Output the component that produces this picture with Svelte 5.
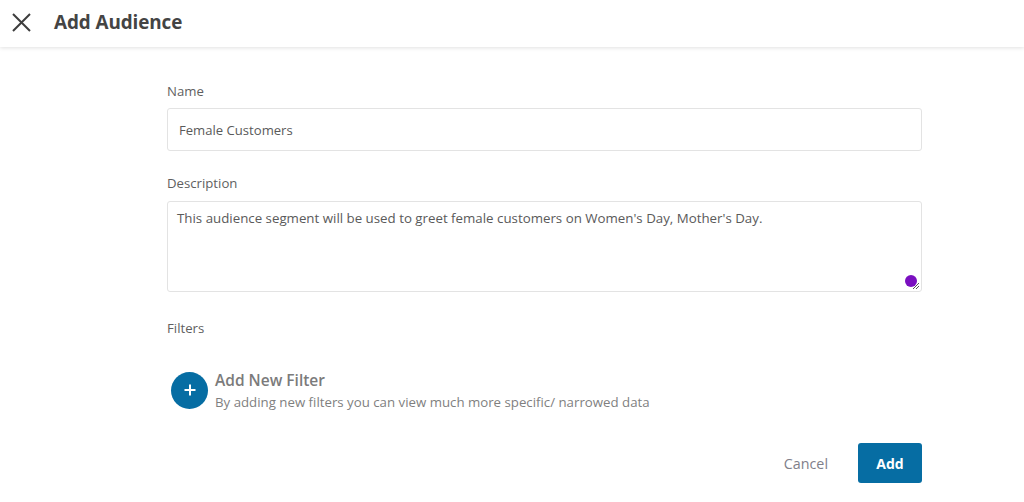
<script>
  let name = 'Female Customers';
  let description = "This audience segment will be used to greet female customers on Women's Day, Mother's Day.";
</script>

<div class="page">
  <header class="header">
    <svg class="close" width="20" height="20" viewBox="0 0 20 20" aria-hidden="true">
      <path d="M2 2 L19 19 M19 2 L2 19" />
    </svg>
    <h1>Add Audience</h1>
  </header>

  <form class="form">
    <label class="field name">
      <span class="label">Name</span>
      <span class="input">{name}</span>
    </label>

    <label class="field desc">
      <span class="label">Description</span>
      <span class="textarea">
        {description}
        <span class="dot"></span>
        <svg class="grip" width="8" height="8" viewBox="0 0 8 8" aria-hidden="true">
          <path d="M1 7 L7 1 M4 7 L7 4" />
        </svg>
      </span>
    </label>

    <div class="label filters">Filters</div>

    <div class="add-filter">
      <span class="plus">
        <svg width="12" height="12" viewBox="0 0 12 12" aria-hidden="true">
          <path d="M6 0.5 V11.5 M0.5 6 H11.5" />
        </svg>
      </span>
      <div class="add-text">
        <div class="add-title">Add New Filter</div>
        <div class="add-sub">By adding new filters you can view much more specific/ narrowed data</div>
      </div>
    </div>

    <div class="actions">
      <button type="button" class="cancel">Cancel</button>
      <button type="button" class="add">Add</button>
    </div>
  </form>
</div>

<style>
  :global(body) {
    margin: 0;
    background: #fff;
  }
  .page {
    height: 502px;
    overflow: hidden;
    font-family: "Open Sans", "Liberation Sans", sans-serif;
    color: #5a5a5a;
  }
  .header {
    height: 47px;
    display: flex;
    align-items: center;
    padding-left: 11px;
    padding-bottom: 4px;
    box-shadow: 0 1px 4px rgba(0, 0, 0, 0.12);
    box-sizing: border-box;
  }
  .close {
    flex: none;
  }
  .close path {
    stroke: #3d3d3d;
    stroke-width: 2;
    fill: none;
  }
  h1 {
    margin: 0 0 0 23px;
    font-size: 18.9px;
    font-weight: 700;
    color: #444;
    letter-spacing: -0.1px;
  }
  .form {
    width: 755px;
    margin-left: 167px;
    padding-top: 34px;
  }
  .field {
    display: block;
  }
  .label {
    display: block;
    font-size: 13.2px;
    line-height: 20px;
    color: #5f5f5f;
  }
  .input {
    display: block;
    box-sizing: border-box;
    height: 43px;
    margin-top: 7px;
    padding-left: 11px;
    border: 1px solid #e3e3e3;
    border-radius: 3px;
    font-size: 13.1px;
    line-height: 43px;
    color: #5a5a5a;
  }
  .desc {
    margin-top: 22px;
  }
  .textarea {
    display: block;
    position: relative;
    box-sizing: border-box;
    height: 91px;
    margin-top: 8px;
    padding: 6px 9px;
    border: 1px solid #e3e3e3;
    border-radius: 3px;
    font-size: 13.3px;
    line-height: 20px;
    color: #5a5a5a;
  }
  .dot {
    position: absolute;
    right: 4px;
    bottom: 4px;
    width: 12px;
    height: 12px;
    border-radius: 50%;
    background: #7a0fc0;
  }
  .grip {
    position: absolute;
    right: 1px;
    bottom: 1px;
  }
  .grip path {
    stroke: #555;
    stroke-width: 1;
    fill: none;
  }
  .filters {
    margin-top: 26px;
  }
  .add-filter {
    display: flex;
    align-items: center;
    gap: 7px;
    margin-top: 29px;
    padding-left: 4px;
  }
  .add-text {
    padding-top: 2px;
  }
  .plus {
    flex: none;
    width: 37px;
    height: 37px;
    border-radius: 50%;
    background: #066da3;
    display: flex;
    align-items: center;
    justify-content: center;
  }
  .plus path {
    stroke: #fff;
    stroke-width: 2;
    fill: none;
  }
  .add-title {
    font-size: 15.5px;
    font-weight: 600;
    line-height: 22px;
    color: #7b7b7b;
  }
  .add-sub {
    font-size: 13.25px;
    line-height: 22px;
    color: #7f7f7f;
  }
  .actions {
    display: flex;
    justify-content: flex-end;
    align-items: center;
    gap: 30px;
    margin-top: 30px;
  }
  button {
    font-family: inherit;
    border: none;
    padding: 0;
    cursor: pointer;
  }
  .cancel {
    background: none;
    font-size: 14.3px;
    color: #80808a;
  }
  .add {
    width: 64px;
    height: 40px;
    border-radius: 3px;
    background: #066da3;
    color: #fff;
    font-size: 14px;
    font-weight: 700;
  }
</style>
